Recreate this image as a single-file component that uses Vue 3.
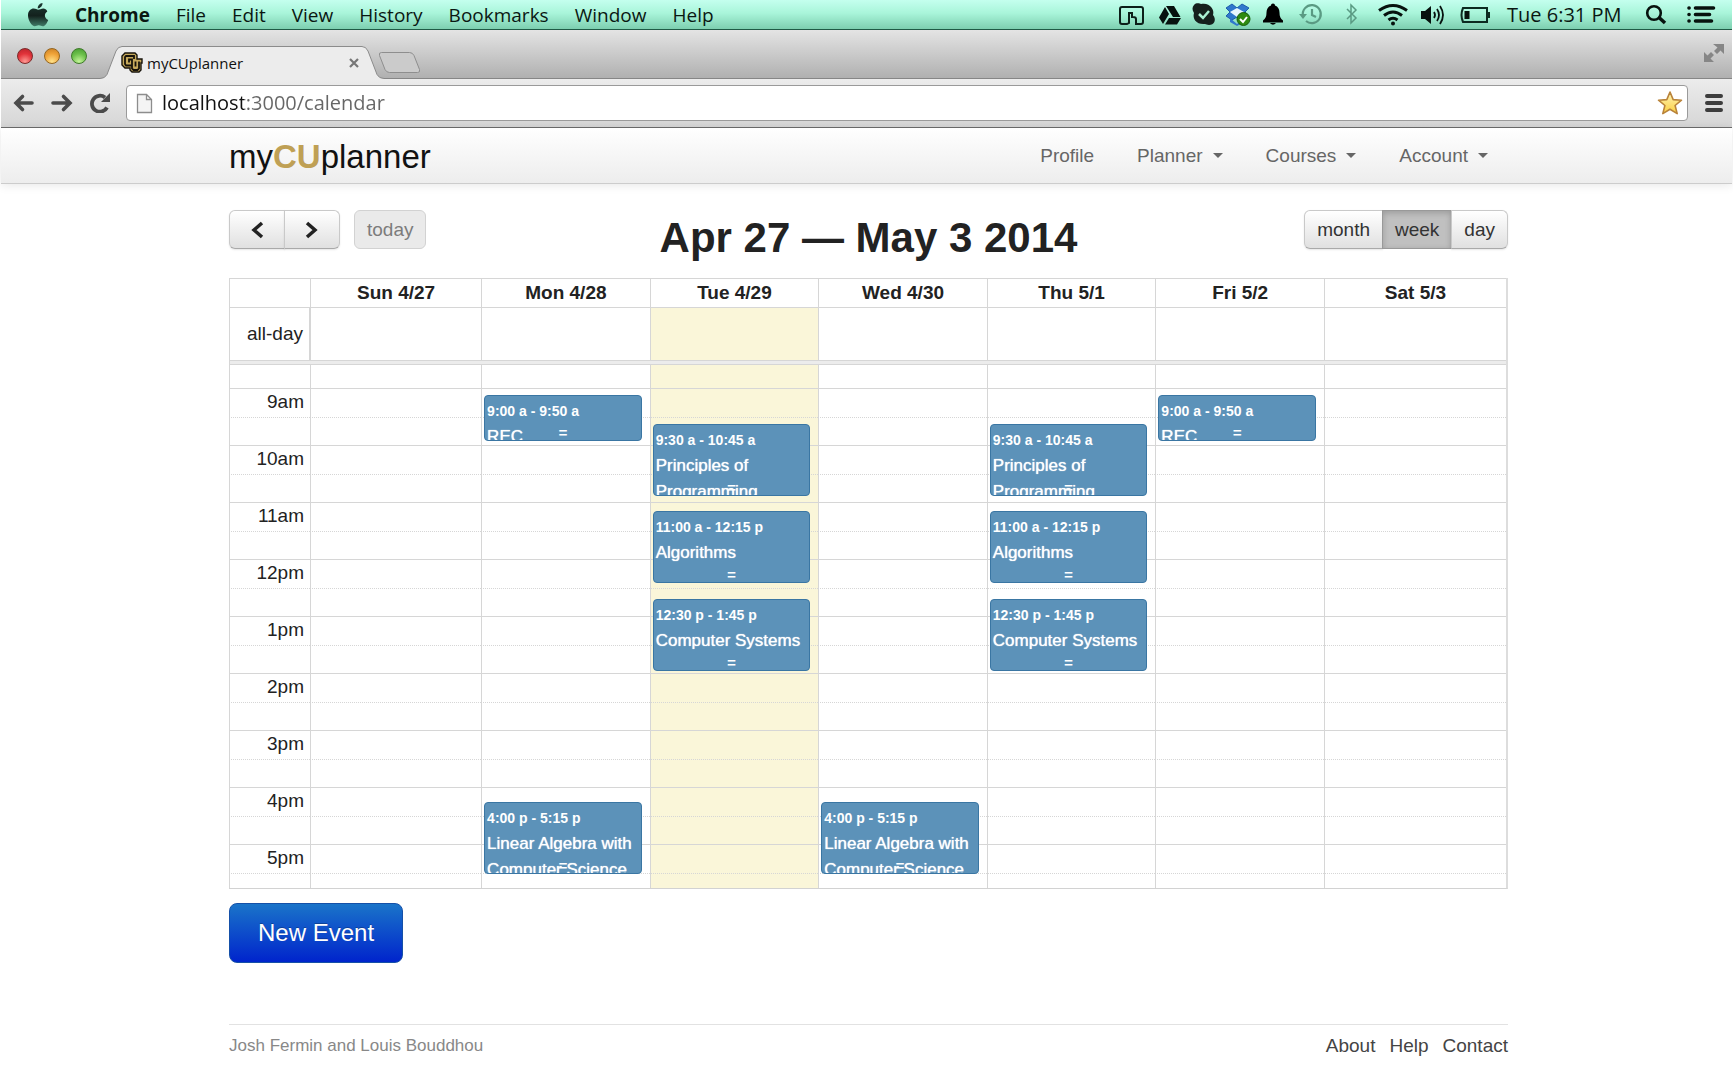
<script setup>
import { ref } from 'vue'

const menus = ['File', 'Edit', 'View', 'History', 'Bookmarks', 'Window', 'Help']
const url = ref('localhost:3000/calendar')
const view = ref('week')
const views = ['month', 'week', 'day']

const navLinks = [
  { label: 'Profile', menu: false },
  { label: 'Planner', menu: true },
  { label: 'Courses', menu: true },
  { label: 'Account', menu: true }
]

const days = ['Sun 4/27', 'Mon 4/28', 'Tue 4/29', 'Wed 4/30', 'Thu 5/1', 'Fri 5/2', 'Sat 5/3']
const today = 2

const hours = ['9am', '10am', '11am', '12pm', '1pm', '2pm', '3pm', '4pm', '5pm']
const slots = hours.flatMap((label, i) => [
  { id: 9 + i, label, half: false },
  { id: 9 + i + 0.5, label: '', half: true }
])

const recitation = { start: 9, minutes: 50, time: '9:00 a - 9:50 a', title: 'REC' }
const principles = { start: 9.5, minutes: 75, time: '9:30 a - 10:45 a', title: 'Principles of Programming' }
const algorithms = { start: 11, minutes: 75, time: '11:00 a - 12:15 p', title: 'Algorithms' }
const systems = { start: 12.5, minutes: 75, time: '12:30 p - 1:45 p', title: 'Computer Systems' }
const algebra = { start: 16, minutes: 75, time: '4:00 p - 5:15 p', title: 'Linear Algebra with Computer Science' }

const events = [
  { day: 1, ...recitation },
  { day: 5, ...recitation },
  { day: 2, ...principles },
  { day: 4, ...principles },
  { day: 2, ...algorithms },
  { day: 4, ...algorithms },
  { day: 2, ...systems },
  { day: 4, ...systems },
  { day: 1, ...algebra },
  { day: 3, ...algebra }
]

const eventsAt = (day, start) => events.filter(e => e.day === day && e.start === start)

// Events run on a slightly taller hour than the grid rows.
const eventBox = e => ({
  top: 6 + Math.floor((e.start - 9) * 1.15) + 'px',
  height: Math.floor(e.minutes * 58 / 60) - (e.minutes > 60 ? 0 : 2) + 'px'
})
</script>

<template>
  <div class="screen">
    <header class="menubar">
      <svg class="apple" width="22" height="25" viewBox="27 1 22 25" aria-hidden="true">
        <defs>
          <linearGradient id="appleFill" x1="0" y1="0" x2="0" y2="1">
            <stop offset="0" stop-color="#1c3a32" /><stop offset=".55" stop-color="#13211d" /><stop offset="1" stop-color="#3f7a66" />
          </linearGradient>
        </defs>
        <path fill="url(#appleFill)" d="M42.500 2c.2 2.600-2 5.300-4.700 5.400C37.500 4.800 39.800 2.300 42.500 2zM47.300 10.500c-3.600 2.200-3 6.800.9 8.400-.9 2.700-3.200 6.300-5.400 6.300-1.600 0-2.100-1-4-1-1.900 0-2.500 1-4 1-2.900 0-6.800-6-6.800-10.800 0-4.500 2.900-6.800 5.700-6.800 1.900 0 3.300 1.200 4.600 1.200 1.200 0 2.900-1.300 5.100-1.300 1.500 0 3.100.8 3.900 3z" />
      </svg>
      <nav class="menus">
        <strong>Chrome</strong>
        <span v-for="m in menus" :key="m">{{ m }}</span>
      </nav>
      <div class="status">
        <svg width="40" height="29" viewBox="1112 0 40 29"><path d="M1127 24h-5q-2 0-2-2V9q0-2 2-2h19q2 0 2 2v13q0 2-2 2h-5v-5q0-2-3-2h-1v-4h-3v10z" fill="none" stroke="#0c1f19" stroke-width="2" /></svg>
        <svg width="35" height="29" viewBox="1152 0 35 29"><path fill="#07120e" d="M1166 6h8l6.500 11h-7.500zM1165 7l4 7-6 10-4-6.500zM1169 18h12l-4 6.500h-12z" /></svg>
        <svg width="33" height="29" viewBox="1187 0 33 29"><path fill="#15201d" d="M1194 5c3-3 6-1 7-1 8-2 14 5 12 11 4 5 1 10-4 10-2 0-3-1-4-1-8 1-13-5-11-11-2-3-2-6 0-8z" /><path d="M1199 14l4 4 6-7" fill="none" stroke="#a9eed1" stroke-width="2.500" /></svg>
        <svg width="36" height="29" viewBox="1220 0 36 29">
          <path fill="#2f78cc" stroke="#1d5cab" d="M1232 4l5 4 5-4 7 4-4 4 4 4-7 4-5-3-5 3-6-4 4-4-4-4z" />
          <path fill="#e8f7ff" d="M1230 12l7-4 7 4-7 5z" /><path fill="#2f78cc" d="M1230 18l7 6 7-6v4l-7 4-7-4z" />
          <circle cx="1243.500" cy="19" r="6.500" fill="#2e8a10" stroke="#17600a" /><path d="M1240 19l3 3 4-5" fill="none" stroke="#fff" stroke-width="2" />
        </svg>
        <svg width="35" height="29" viewBox="1256 0 35 29"><path d="M1273 3.500c1.200 0 2 .8 2 2 3 1 4.500 4 4.500 7 0 4 1 6 3.500 8v2h-20v-2c2.500-2 3.500-4 3.500-8 0-3 1.500-6 4.500-7 0-1.200.8-2 2-2zM1270 23h6q-3 3.500-6 0z" /></svg>
        <svg width="43" height="29" viewBox="1291 0 43 29"><g fill="none" stroke="#5a9a83" stroke-width="2.200"><path d="M1303 16a9 9 0 1 1 3 5M1312 9v6l4 2" /></g><path fill="#5a9a83" d="M1299 14h8l-4 5z" /></svg>
        <svg width="34" height="29" viewBox="1334 0 34 29"><path d="M1347 9l9 9-5 5V5l5 5-9 9" fill="none" stroke="#5a9a83" stroke-width="1.500" /></svg>
        <svg width="47" height="29" viewBox="1368 0 47 29"><g fill="none" stroke="#07120e" stroke-width="3"><path d="M1379 10.500q14-10 28 0M1384 15.500q9-7 18 0M1388.500 20q4.500-3.500 9 0" /></g><circle cx="1393" cy="23.500" r="2" fill="#07120e" /></svg>
        <svg width="37" height="29" viewBox="1415 0 37 29"><path fill="#07120e" d="M1421 11h4l6-5v18l-6-5h-4z" /><path d="M1434 12q2 3 0 6M1437 9q4 6 0 12M1440 6q6 9 0 18" fill="none" stroke="#07120e" stroke-width="1.800" /></svg>
        <svg width="46" height="29" viewBox="1452 0 46 29"><path d="M1463 8h24v14h-24q-3-7 0-14z" fill="none" stroke="#0c2a20" stroke-width="2" /><rect x="1464.500" y="11" width="5" height="8" fill="#07120e" /><path fill="#0c2a20" d="M1487.500 12h2.500v6h-2.500z" /></svg>
        <time>Tue 6:31 PM</time>
        <svg width="40" height="29" viewBox="1637 0 40 29"><circle cx="1654" cy="13" r="6.800" fill="none" stroke="#07120e" stroke-width="2.600" /><path d="M1659 17.500l6 5.500" stroke="#07120e" stroke-width="3.500" /></svg>
        <svg width="55" height="29" viewBox="1677 0 55 29"><g stroke="#07120e" stroke-width="3.600" stroke-linecap="round"><path d="M1689 8h.1M1689 14.500h.1M1689 21h.1M1695.500 8h18M1695.500 14.500h14M1695.500 21h16" /></g></svg>
      </div>
    </header>

    <div class="tabstrip">
      <div class="lights">
        <button class="light red" aria-label="Close window"></button>
        <button class="light amber" aria-label="Minimize window"></button>
        <button class="light green" aria-label="Zoom window"></button>
      </div>
      <div class="tab">
        <svg class="tabshape" width="290" height="34" viewBox="0 0 290 34" aria-hidden="true">
          <path d="M0 32.500q5 0 7-4L16 5q2-4.500 6-4.500h240q4 0 6 4.500l9 23.500q2 4 7 4V34H0z" fill="#ececec" />
          <path d="M0 32.500q5 0 7-4L16 5q2-4.500 6-4.500h240q4 0 6 4.500l9 23.500q2 4 7 4" fill="none" stroke="#8b8b8b" />
        </svg>
        <svg class="favicon" width="22" height="22" viewBox="0 0 22 22" aria-hidden="true">
          <path d="M4 1h10l2 2v4h5v4h-1v7l-2 2h-7l-2-2v-2H4l-3-3V4z" fill="#c6a95b" stroke="#17130b" stroke-width="1.400" />
          <path d="M13 7V4H5L4 5v7l1 1.500h6v3l1.500 1.500h4l1.500-1.500V9.500M11 13V7.500H8v3M14.500 9.500v5" fill="none" stroke="#17130b" stroke-width="1.800" />
        </svg>
        <span class="tabtitle">myCUplanner</span>
        <button class="tabclose" aria-label="Close tab">
          <svg width="12" height="12" viewBox="0 0 12 12"><path d="M2 2l8 8M10 2l-8 8" stroke="#777" stroke-width="2.200" /></svg>
        </button>
      </div>
      <button class="newtab" aria-label="New tab">
        <svg width="45" height="24" viewBox="0 0 45 24"><path d="M4.500 1.500h28q3 0 4.500 3l5.500 14q1 3-2 3h-28q-3 0-4.500-3L2.500 4.500q-1-3 2-3z" fill="#cbcbcb" stroke="#8e8e8e" /></svg>
      </button>
      <button class="fullscreen" aria-label="Enter full screen">
        <svg width="20" height="20" viewBox="0 0 20 20"><path fill="#868686" d="M9 1h11v10l-3.500-3.500L13 11l-3-3 3.500-3.500zM0 9l3.500 3.500L7 9l3 3-3.500 3.500L10 19H0z" /></svg>
      </button>
    </div>

    <div class="toolbar">
      <button aria-label="Back">
        <svg width="22" height="20" viewBox="0 0 22 20"><path d="M19 10H4M9.500 3.500L3 10l6.500 6.500" fill="none" stroke="#4b4b4b" stroke-width="3.600" stroke-linecap="round" /></svg>
      </button>
      <button aria-label="Forward">
        <svg width="22" height="20" viewBox="0 0 22 20"><path d="M2 10h16M12.500 3.500L19 10l-6.500 6.500" fill="none" stroke="#4b4b4b" stroke-width="3.600" stroke-linecap="round" /></svg>
      </button>
      <button aria-label="Reload">
        <svg width="22" height="20" viewBox="0 0 22 20"><path d="M18 14.500A8 8 0 1 1 16 4.500" fill="none" stroke="#4b4b4b" stroke-width="3.800" /><path d="M21 0v9h-9z" fill="#4b4b4b" /></svg>
      </button>
      <div class="omnibox">
        <svg width="17" height="21" viewBox="0 0 17 21" aria-hidden="true"><path d="M1.500 1.500h9l5 5v13h-14zM10.500 1.500v5h5" fill="#f4f4f4" stroke="#8d8d8d" stroke-width="1.300" /></svg>
        <input v-model="url" class="url" type="text" aria-label="Address" spellcheck="false" />
        <button aria-label="Edit bookmark">
          <svg width="26" height="26" viewBox="0 0 26 26">
            <defs><linearGradient id="starFill" x1="0" y1="0" x2="0" y2="1"><stop offset="0" stop-color="#fff3b8" /><stop offset="1" stop-color="#fbd040" /></linearGradient></defs>
            <path d="M13 2l3.200 7.600 8.300.6-6.400 5.300 2.100 8.100L13 19.200l-7.200 4.400 2.100-8.100L1.500 10.200l8.300-.6z" fill="url(#starFill)" stroke="#b9833a" stroke-width="1.600" stroke-linejoin="round" />
          </svg>
        </button>
      </div>
      <button class="burger" aria-label="Chrome menu">
        <svg width="20" height="20" viewBox="0 0 20 20"><path d="M3 3h14M3 10h14M3 17h14" stroke="#3d3d3d" stroke-width="4" stroke-linecap="round" /></svg>
      </button>
    </div>

    <div class="page">
      <div class="navbar">
        <div class="container navrow">
          <a class="brand" href="#">my<b>CU</b>planner</a>
          <nav class="links">
            <a v-for="l in navLinks" :key="l.label" href="#">{{ l.label }}<i v-if="l.menu" class="caret"></i></a>
          </nav>
        </div>
      </div>

      <main>
        <div class="container">
          <div class="calhead">
            <div class="left">
              <div class="group">
                <button class="btn arrow" aria-label="Previous week">
                  <svg width="14" height="18" viewBox="0 0 14 18"><path d="M12 2L4 9l8 7" fill="none" stroke="#222" stroke-width="3.500" /></svg>
                </button>
                <button class="btn arrow" aria-label="Next week">
                  <svg width="14" height="18" viewBox="0 0 14 18"><path d="M2 2l8 7-8 7" fill="none" stroke="#222" stroke-width="3.500" /></svg>
                </button>
              </div>
              <button class="btn todaybtn" disabled>today</button>
            </div>
            <h2>Apr 27 — May 3 2014</h2>
            <div class="group right">
              <button v-for="v in views" :key="v" class="btn" :class="{ active: v === view }" @click="view = v">{{ v }}</button>
            </div>
          </div>

          <table class="calendar">
            <colgroup>
              <col class="axiscol" />
              <col v-for="(d, i) in days" :key="d" :class="['daycol', { sunday: i === 0, saturday: i === 6 }]" />
            </colgroup>
            <thead>
              <tr class="headrow">
                <td></td>
                <th v-for="d in days" :key="d" scope="col">{{ d }}</th>
              </tr>
            </thead>
            <tbody>
              <tr class="allday">
                <th scope="row" class="axis">all-day</th>
                <td v-for="(d, i) in days" :key="d" :class="{ today: i === today }"></td>
              </tr>
              <tr class="divider"><td colspan="8"></td></tr>
              <tr class="early">
                <td></td>
                <td v-for="(d, i) in days" :key="d" :class="{ today: i === today }"></td>
              </tr>
              <tr v-for="s in slots" :key="s.id" class="slot" :class="{ half: s.half }">
                <th scope="row" class="axis">{{ s.label }}</th>
                <td v-for="(d, i) in days" :key="d" :class="{ today: i === today }">
                  <article v-for="e in eventsAt(i, s.id)" :key="e.title" class="event" :style="eventBox(e)">
                    <div class="time">{{ e.time }}</div>
                    <div class="title">{{ e.title }}</div>
                    <div class="grip">=</div>
                  </article>
                </td>
              </tr>
            </tbody>
          </table>

          <button class="newevent">New Event</button>

          <footer>
            <small>Josh Fermin and Louis Bouddhou</small>
            <nav>
              <a href="#">About</a>
              <a href="#">Help</a>
              <a href="#">Contact</a>
            </nav>
          </footer>
        </div>
      </main>
    </div>
  </div>
</template>

<style>
body {
  background: #fff;
}
</style>

<style scoped>
* {
  box-sizing: border-box;
}

.screen {
  padding: 0 1px;
  font-family: "Liberation Sans", Arial, sans-serif;
  font-size: 19px;
  color: #222;
}

button {
  margin: 0;
  padding: 0;
  border: 0;
  background: none;
  font: inherit;
  color: inherit;
}

svg {
  display: block;
  flex: none;
}

a {
  text-decoration: none;
}

/* Menu bar */
.menubar {
  display: flex;
  align-items: center;
  height: 30px;
  padding-left: 26px;
  border-bottom: 1px solid #1f5a45;
  background: linear-gradient(#c4ffee, #a9f5da 45%, #7dcfb0);
  font-family: "Open Sans", "Noto Sans", sans-serif;
  color: #0a1712;
}

.menus {
  display: flex;
  gap: 26px;
  margin-left: 26px;
}

.status {
  display: flex;
  align-items: center;
  margin-left: auto;
}

.status time {
  width: 139px;
  padding-left: 9px;
  font-size: 20px;
  white-space: nowrap;
}

/* Tab strip */
.tabstrip {
  display: flex;
  align-items: flex-end;
  height: 49px;
  border-bottom: 1px solid #868686;
  background: linear-gradient(#e4e4e4, #b0b0b0);
}

.lights {
  display: flex;
  gap: 11px;
  align-self: flex-start;
  padding: 18px 13px 0 16px;
}

.light {
  width: 16px;
  height: 16px;
  border: 1px solid #7c2a2a;
  border-radius: 50%;
}

.red {
  background: radial-gradient(circle at 50% 90%, #ff9a94, #e2333a 55%, #b5232b);
}

.amber {
  border-color: #94651f;
  background: radial-gradient(circle at 50% 90%, #ffe28a, #f0a338 55%, #c97d22);
}

.green {
  border-color: #3f7a2a;
  background: radial-gradient(circle at 50% 90%, #c5f59a, #6cc04a 55%, #459a30);
}

.tab {
  position: relative;
  display: flex;
  align-items: center;
  width: 284px;
  height: 33px;
  margin-bottom: -1px;
  padding: 0 24px 0 21px;
}

.tabshape {
  position: absolute;
  left: 0;
  top: 0;
}

.favicon,
.tabtitle,
.tabclose {
  position: relative;
}

.tabtitle {
  flex: 1;
  margin-left: 4px;
  font-family: "Open Sans", "Noto Sans", sans-serif;
  font-size: 15px;
  color: #111;
}

.newtab {
  margin: 0 0 3px -7px;
}

.fullscreen {
  align-self: flex-start;
  margin: 13px 8px 0 auto;
}

/* Toolbar */
.toolbar {
  display: flex;
  align-items: center;
  gap: 16px;
  height: 49px;
  padding: 0 8px 0 12px;
  border-bottom: 1px solid #6d6d6d;
  background: linear-gradient(#ececec, #d6d6d6);
}

.omnibox {
  display: flex;
  flex: 1;
  align-items: center;
  height: 36px;
  margin-left: -1px;
  padding: 0 4px 0 9px;
  border: 1px solid #9a9a9a;
  border-radius: 4px;
  background: #fff;
}

.url {
  flex: 1;
  min-width: 0;
  margin-left: 9px;
  padding: 0;
  border: 0;
  outline: 0;
  background: linear-gradient(90deg, #111 82px, #666 82px);
  background-clip: text;
  color: transparent;
  font-family: "Open Sans", "Noto Sans", sans-serif;
  font-size: 20px;
  line-height: 32px;
}

/* Site navigation */
.container {
  max-width: 1279px;
  margin: 0 auto;
}

.navbar,
main {
  padding-left: 4px;
}

.navbar {
  border-bottom: 1px solid #ccc;
  background: linear-gradient(#fff, #ededed);
  box-shadow: 0 1px 10px rgba(0, 0, 0, 0.1);
}

.navrow {
  display: flex;
  align-items: center;
  justify-content: space-between;
  height: 55px;
}

.brand {
  padding-top: 3px;
  font-size: 33px;
  color: #111;
}

.brand b {
  color: #bfa055;
}

.links {
  display: flex;
  gap: 3px;
}

.links a {
  display: flex;
  align-items: center;
  padding: 0 20px;
  color: #666;
}

.caret {
  margin-left: 10px;
  border: 5px solid transparent;
  border-top-color: #666;
  border-bottom: 0;
}

/* Calendar header */
main {
  padding-top: 26px;
}

.calhead {
  display: grid;
  grid-template-columns: 1fr auto 1fr;
  align-items: start;
  height: 68px;
}

.left,
.group {
  display: flex;
}

.left {
  gap: 14px;
}

.right {
  justify-self: end;
}

h2 {
  margin: 0;
  font-size: 42px;
  line-height: 56px;
}

.btn {
  height: 39px;
  padding: 0 12px;
  border: 1px solid #c9c9c9;
  border-bottom-color: #a9a9a9;
  background: linear-gradient(#fff, #e0e0e0);
  box-shadow: 0 1px 2px rgba(0, 0, 0, 0.1);
  color: #333;
}

.group .btn + .btn {
  margin-left: -1px;
}

.group .btn:first-child {
  border-radius: 6px 0 0 6px;
}

.group .btn:last-child {
  border-radius: 0 6px 6px 0;
}

.arrow {
  display: flex;
  align-items: center;
  justify-content: center;
  width: 56px;
}

.group .active {
  border-color: #999;
  background: #c0c0c0;
  box-shadow: inset 0 2px 6px rgba(0, 0, 0, 0.2);
}

.todaybtn {
  border-color: #d2d2d2;
  border-radius: 6px;
  background: #eaeaea;
  box-shadow: none;
  color: #7c7c7c;
}

/* Calendar grid */
.calendar {
  width: 100%;
  table-layout: fixed;
  border-spacing: 0;
  border-right: 2px solid #ddd;
  border-bottom: 1px solid #d2d2d2;
}

.axiscol {
  width: 81px;
}

.daycol {
  width: 13.2%;
}

.sunday {
  width: 13.4%;
}

.saturday {
  width: auto;
}

.calendar th,
.calendar td {
  position: relative;
  padding: 0;
  border: solid #d6d6d6;
  border-width: 1px 0 0 1px;
}

.headrow th,
.headrow td {
  height: 29px;
  line-height: 28px;
}

.calendar .axis {
  padding-right: 6px;
  font-weight: normal;
  text-align: right;
  vertical-align: top;
}

.allday th,
.allday td {
  height: 53px;
  line-height: 52px;
}

.calendar .allday .axis {
  border-right: 1px solid #d6d6d6;
}

.calendar .divider td {
  height: 4px;
  background: #ececec;
}

.early td {
  height: 24px;
}

.slot th,
.slot td {
  height: 29px;
  line-height: 26px;
}

.half th,
.half td {
  height: 28px;
}

.calendar .half th,
.calendar .half td {
  border-top-style: dotted;
}

.slot:last-child th,
.slot:last-child td {
  height: 15px;
  line-height: 14px;
}

.today {
  background: #faf6d9;
}

.event {
  position: absolute;
  z-index: 1;
  left: 2px;
  right: 8px;
  overflow: hidden;
  padding: 2px;
  border: 1px solid #3a76a3;
  border-radius: 4px;
  background: #5c92b9;
  color: #fff;
  line-height: 26px;
}

.event .time {
  font-size: 14px;
  font-weight: bold;
}

.event .title {
  font-size: 17px;
  text-shadow: 0 0 1px #fff;
}

.grip {
  position: absolute;
  bottom: 0;
  left: 0;
  right: 0;
  font-family: "Liberation Mono", monospace;
  font-size: 15px;
  font-weight: bold;
  line-height: 11px;
  text-align: center;
}

.newevent {
  display: block;
  height: 60px;
  margin-top: 14px;
  padding: 0 28px;
  border: 1px solid #1550a8;
  border-radius: 8px;
  background: linear-gradient(#1a74c9, #0024cc);
  color: #fff;
  font-size: 24px;
  text-shadow: 0 -1px 0 rgba(0, 0, 0, 0.25);
}

footer {
  display: flex;
  align-items: center;
  justify-content: space-between;
  height: 42px;
  margin-top: 61px;
  border-top: 1px solid #e2e2e2;
}

footer small {
  font-size: 17px;
  color: #888;
}

footer nav {
  display: flex;
  gap: 14px;
}

footer a {
  color: #444;
}
</style>
